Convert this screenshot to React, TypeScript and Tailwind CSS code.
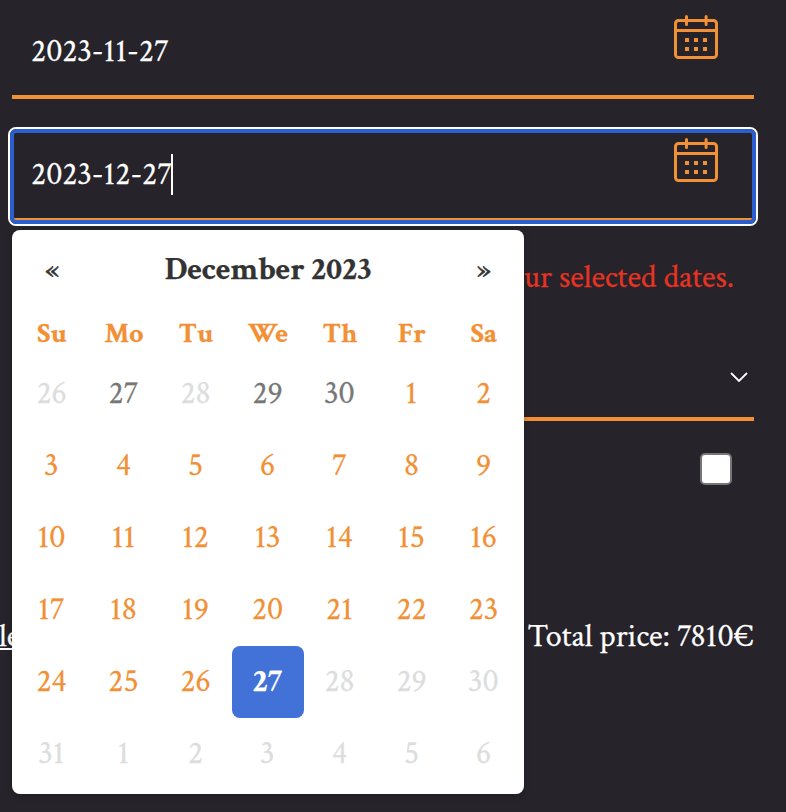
import React from "react";

const weekdays = ["Su", "Mo", "Tu", "We", "Th", "Fr", "Sa"];

type Tone = "available" | "past" | "disabled" | "selected";

const toneClass: Record<Tone, string> = {
  available: "text-[#f19035]",
  past: "text-[#777777]",
  disabled: "text-[#dddddd]",
  selected: "rounded-lg bg-[#4272d7] font-bold text-white",
};

const days: { label: number; tone: Tone }[] = Array.from({ length: 42 }, (_, i) => {
  if (i < 5) return { label: 26 + i, tone: i === 0 || i === 2 ? "disabled" : "past" };
  const d = i - 4;
  if (d === 27) return { label: d, tone: "selected" };
  return { label: d > 31 ? d - 31 : d, tone: d > 27 ? "disabled" : "available" };
});

function CalendarIcon({ className = "" }: { className?: string }) {
  return (
    <svg className={`h-11 w-11 ${className}`} viewBox="0 0 44 44" fill="none" stroke="#f19035" strokeWidth="3">
      <rect x="1.5" y="5.5" width="41" height="37" rx="3" />
      <path d="M1.5 15.5H42.5" />
      <path d="M12.5 1.5V9.5M32.1 1.5V9.5" strokeLinecap="round" />
      <path
        d="M11 23h4v4h-4zM20 23h4v4h-4zM29 23h4v4h-4zM11 32h4v4h-4zM20 32h4v4h-4zM29 32h4v4h-4z"
        fill="#f19035"
        stroke="none"
      />
    </svg>
  );
}

function DateField({ value, focused = false }: { value: string; focused?: boolean }) {
  return (
    <div className="relative flex h-[91px] items-start justify-between border-b-4 border-[#f19035] pr-9 pl-[19px]">
      <div className="mt-[23px] flex h-[41px]">
        <span className="pt-px">{value}</span>
        {focused && <span className="-ml-px w-0.5 bg-white" />}
      </div>
      <CalendarIcon className="mt-[7px]" />
      {focused && (
        <div className="absolute -top-1 -right-1 -bottom-2 -left-1 rounded-lg border-2 border-white">
          <div className="h-full rounded-md border-4 border-[#2a5fcd]" />
        </div>
      )}
    </div>
  );
}

function DatePicker() {
  return (
    <div className="absolute top-[230px] left-3 w-[512px] rounded-lg bg-white p-1 shadow-[0_2px_6px_rgba(0,0,0,0.2)]">
      <div className="grid h-[72px] grid-cols-[72px_1fr_72px] items-center text-center text-[#333333]">
        <span className="pt-0.5 text-[30px] [-webkit-text-stroke:0.6px_#333333]">«</span>
        <span className="font-bold">December 2023</span>
        <span className="pt-0.5 text-[30px] [-webkit-text-stroke:0.6px_#333333]">»</span>
      </div>
      <div className="grid h-[52px] grid-cols-7 items-center pt-[3px] text-center text-[28px] font-bold text-[#f19035]">
        {weekdays.map((d) => (
          <span key={d} className="[-webkit-text-stroke:0.3px_#f19035]">{d}</span>
        ))}
      </div>
      <div className="grid grid-cols-7">
        {days.map(({ label, tone }, i) => (
          <div
            key={i}
            className={`flex h-[72px] items-center justify-center pr-px [-webkit-text-stroke:0.25px_currentColor] ${toneClass[tone]}`}
          >
            {label}
          </div>
        ))}
      </div>
    </div>
  );
}

export default function App() {
  return (
    <main className="relative h-[812px] w-[786px] overflow-hidden bg-[#26232a] pt-2 pr-8 pl-3 font-['Crimson_Text','Liberation_Serif',serif] text-[32px] leading-10 text-white [-webkit-text-stroke:0.25px_currentColor]">
      <DateField value="2023-11-27" />
      <div className="mt-8">
        <DateField value="2023-12-27" focused />
      </div>
      <p className="mt-[36px] pr-5 text-right text-[#e63323]">ur selected dates.</p>
      <div className="flex h-[123px] items-start justify-end border-b-4 border-[#f19035] pt-[74px] pr-1.5">
        <svg className="h-3 w-[18px]" viewBox="0 0 18 12" fill="none" stroke="white" strokeWidth="1.8">
          <path d="M1 1L9 9L17 1" />
        </svg>
      </div>
      <div className="mt-8 flex justify-end pr-[22px]">
        <div className="h-8 w-8 rounded-[5px] border-2 border-[#767676] bg-white" />
      </div>
      <div className="mt-[132px] -ml-[13px] flex justify-between">
        <span className="underline decoration-2 underline-offset-2">le</span>
        <span>Total price: 7810€</span>
      </div>
      <DatePicker />
    </main>
  );
}
